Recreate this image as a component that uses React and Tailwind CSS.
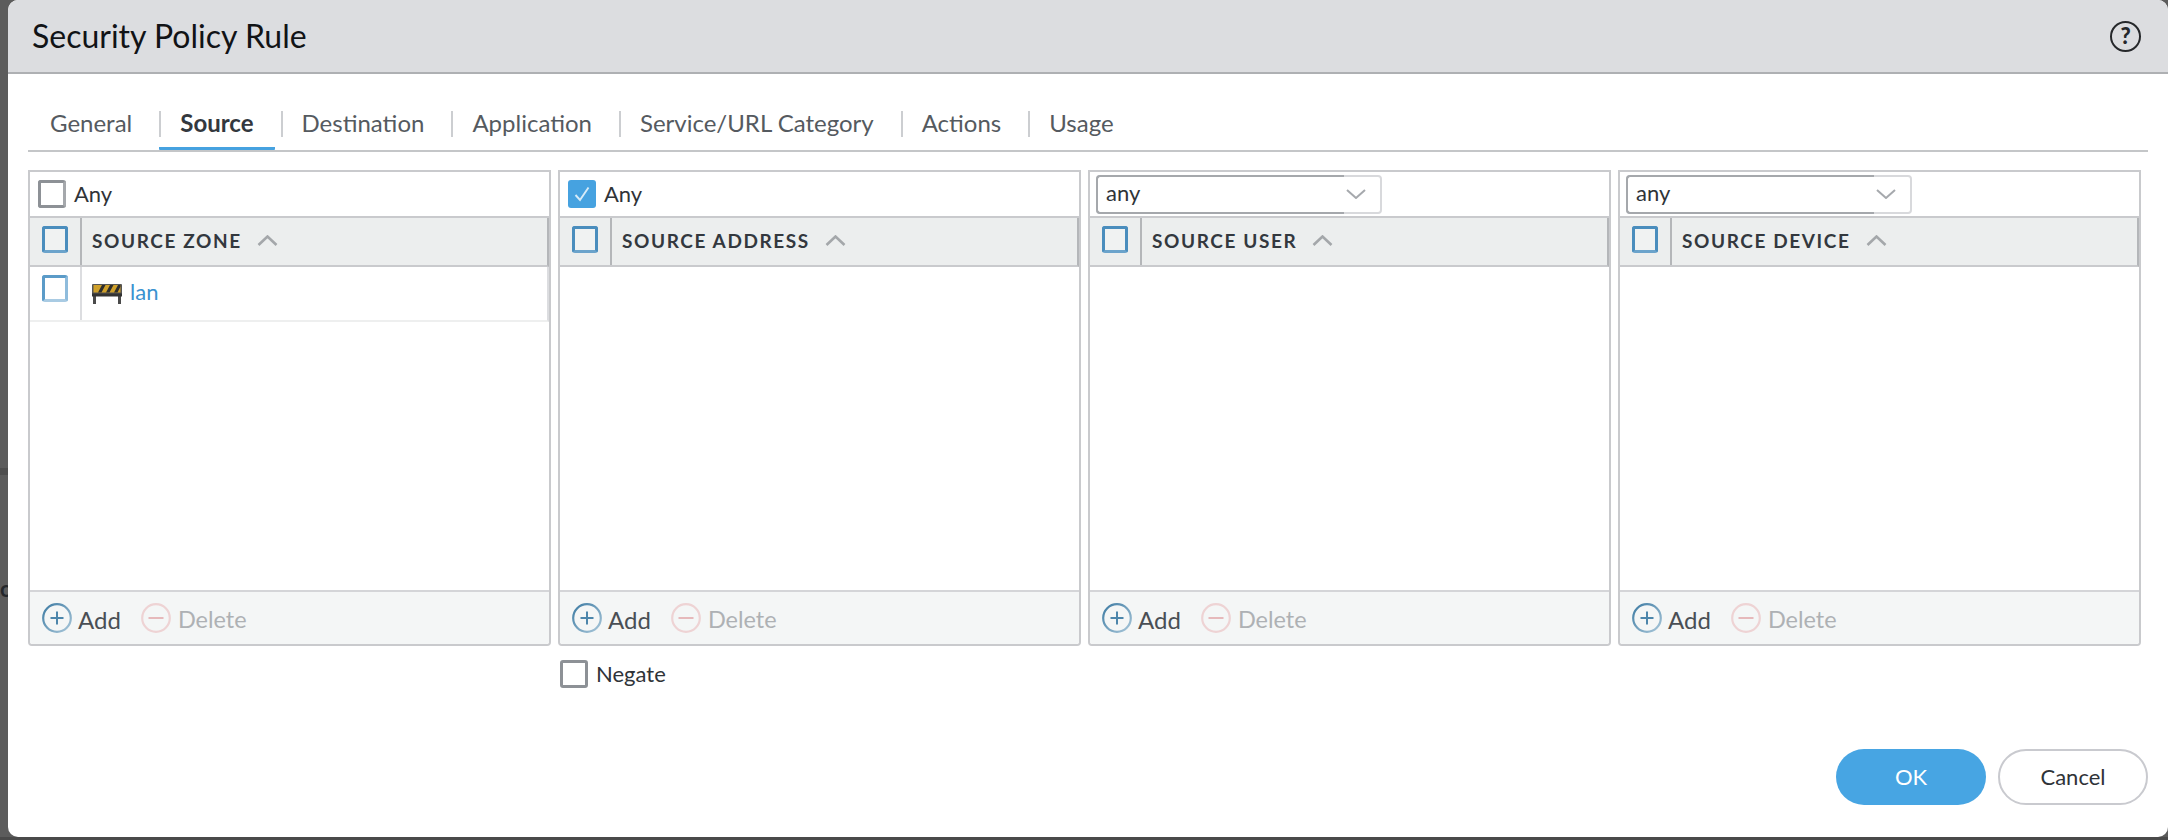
import React from "react";

function PlusIcon() {
  return (
    <svg width="30" height="30" viewBox="0 0 30 30" className="shrink-0">
      <defs>
        <linearGradient id="addRing" x1="0" y1="0" x2="1" y2="1">
          <stop offset="0" stopColor="#3d7ba3" />
          <stop offset="1" stopColor="#a8c6d9" />
        </linearGradient>
      </defs>
      <circle cx="15" cy="15" r="13.8" fill="none" stroke="url(#addRing)" strokeWidth="2.2" />
      <path d="M15 8.5v13M8.5 15h13" stroke="#4d86ab" strokeWidth="2" fill="none" />
    </svg>
  );
}

function MinusIcon() {
  return (
    <svg width="30" height="30" viewBox="0 0 30 30" className="shrink-0">
      <circle cx="15" cy="15" r="13.8" fill="none" stroke="#eed3d4" strokeWidth="2.2" />
      <path d="M7.5 15h15" stroke="#e6b9bb" strokeWidth="2" fill="none" />
    </svg>
  );
}

function BarrierIcon() {
  return (
    <svg width="30" height="21" viewBox="0 0 30 21" className="shrink-0">
      <rect x="1" y="12" width="3" height="9" fill="#4a4a4a" />
      <rect x="26" y="12" width="3" height="9" fill="#4a4a4a" />
      <rect x="0" y="1" width="30" height="12" rx="1" fill="#555555" />
      <rect x="1.5" y="2" width="27" height="7.5" fill="#cfa02a" />
      <path d="M6 9.5 10 2h3.5l-4 7.5zM14 9.5 18 2h3.5l-4 7.5zM22 9.5 26 2h2.5v1.5l-3 6z" fill="#2e2e2e" />
      <rect x="0" y="10.5" width="30" height="3" fill="#333333" />
    </svg>
  );
}

function BlueCheck({ soft }) {
  return (
    <span
      className={
        soft
          ? "block w-[26px] h-[27px] rounded-[3px] border-[3px] border-[#5b9bc8] border-b-[#a9cbe3] border-r-[#8fbcdc] bg-white"
          : "block w-[26px] h-[27px] rounded-[3px] border-[3px] border-[#4a8dbd] border-b-[#6ba3cb] bg-[#f0f2f2]"
      }
    />
  );
}

function AnyCheck({ checked, label }) {
  return (
    <div className="flex items-center gap-[8px]">
      {checked ? (
        <span className="flex items-center justify-center w-[28px] h-[28px] rounded-[3px] bg-[#46a2e0]">
          <svg width="20" height="20" viewBox="0 0 20 20">
            <path d="M3.5 11 8 16 16.5 3.5" stroke="#d6ebf8" strokeWidth="1.9" fill="none" />
          </svg>
        </span>
      ) : (
        <span className="block w-[28px] h-[28px] rounded-[3px] border-[3px] border-[#8d9196] border-r-[#a5a8ac] bg-white" />
      )}
      <span className="text-[22px] leading-none text-[#2f3338]">{label}</span>
    </div>
  );
}

function AnySelect() {
  return (
    <div className="relative flex items-center justify-between w-[286px] h-[39px] ml-[6px] pl-[8px] pr-[14px] rounded-[4px] border-2 border-[#d8d9dc] bg-white">
      <span className="text-[22px] leading-none text-[#2f3338] -mt-[3px]">any</span>
      <svg width="20" height="10" viewBox="0 0 20 10">
        <path d="M1 1l9 8 9-8" stroke="#a6a9ad" strokeWidth="2" fill="none" />
      </svg>
      <span className="absolute -left-[2px] -top-[2px] -bottom-[2px] w-[248px] rounded-l-[4px] border-2 border-r-0 border-[#a5a8ac]" />
    </div>
  );
}

function Panel({ title, control, children }) {
  return (
    <div className="flex flex-col h-[476px] border-2 border-[#c9cacd] rounded-b-[4px] bg-white">
      <div className="flex items-center h-[46px] shrink-0 border-b-2 border-[#c9cacd]">{control}</div>
      <div className="flex h-[49px] shrink-0 border-b-2 border-[#c9cacd] border-r-2 border-r-[#b4b6b9] bg-[#eceeee]">
        <div className="flex items-center justify-center w-[52px] shrink-0 border-r-2 border-[#b4b6b9] pr-[1px]">
          <span className="-mt-[5px]"><BlueCheck /></span>
        </div>
        <div className="flex items-center pl-[10px] gap-[15px] -mt-[2px]">
          <span className="text-[19px] leading-none font-bold tracking-[1.6px] text-[#33383e]">{title}</span>
          <svg width="21" height="11" viewBox="0 0 21 11">
            <path d="M1.5 10l9-8.5 9 8.5" stroke="#a4a7aa" strokeWidth="2.6" fill="none" />
          </svg>
        </div>
      </div>
      <div className="flex-1">{children}</div>
      <div className="flex items-center h-[54px] shrink-0 border-t-2 border-[#d4d5d8] bg-[#f4f6f6] pl-[12px] rounded-b-[3px]">
        <PlusIcon />
        <span className="ml-[6px] text-[24px] leading-none text-[#4a4f55] mt-[3px]">Add</span>
        <span className="ml-[20px]"><MinusIcon /></span>
        <span className="ml-[7px] text-[23.5px] leading-none text-[#aeb1b4] mt-[3px]">Delete</span>
      </div>
    </div>
  );
}

const tabs = [
  ["General", false],
  ["Source", true],
  ["Destination", false],
  ["Application", false],
  ["Service/URL Category", false],
  ["Actions", false],
  ["Usage", false],
];

export default function App() {
  return (
    <div className="relative h-[840px] w-full overflow-hidden bg-[#5c5c5c] font-['Lato','Noto_Sans',sans-serif]">
      <div className="absolute left-0 top-[468px] h-[7px] w-[8px] bg-[#4e4e4e]" />
      <div className="absolute left-0 top-[578px] text-[22px] font-bold leading-none text-[#24272b]">c</div>
      <div className="absolute bottom-0 left-0 h-[3px] w-full bg-[#4a4a4a]" />
      <div className="relative ml-[8px] flex h-[837px] flex-col overflow-hidden rounded-[10px] bg-white">
        <div className="flex h-[74px] shrink-0 items-center justify-between border-b-2 border-[#aeb0b3] bg-[#dcdde0] pl-[24px] pr-[27px]">
          <h1 className="text-[32px] font-normal leading-none text-[#111316]">Security Policy Rule</h1>
          <span className="flex h-[31px] w-[31px] items-center justify-center rounded-full border-[2.5px] border-[#26282b] text-[22px] font-black leading-none text-[#26282b]">?</span>
        </div>

        <div className="mx-[20px] mt-[34px] flex h-[44px] shrink-0 items-start border-b-2 border-[#c4c6c8] pl-[1px]">
          {tabs.map(([name, active], i) => (
            <div key={name} className="flex h-[42px] items-start mr-[6px]">
              {i > 0 && <span className="mt-[3px] h-[26px] w-[2px] -mr-[2px] bg-[#ccced1]" />}
              <div
                className={
                  active
                    ? "h-[42px] px-[21px] text-[24px] font-bold leading-[30px] text-[#33383e] border-b-[3px] border-[#46a2e0] rounded-b-[1px]"
                    : "px-[21px] text-[24px] leading-[30px] text-[#555a60]"
                }
              >
                {name}
              </div>
            </div>
          ))}
        </div>

        <div className="ml-[20px] mr-[27px] mt-[18px] grid shrink-0 grid-cols-4 gap-x-[7px]">
          <Panel title="SOURCE ZONE" control={<div className="pl-[8px]"><AnyCheck label="Any" /></div>}>
            <div className="flex h-[55px] border-b-2 border-[#eeefef] border-r-2 border-r-[#dcdde0]">
              <div className="flex w-[52px] shrink-0 justify-center border-r-2 border-[#dcdde0] pt-[8px] pr-[1px]">
                <BlueCheck soft />
              </div>
              <div className="flex items-center gap-[8px] pl-[10px]">
                <BarrierIcon />
                <span className="text-[22px] leading-none text-[#3a92d0] -mt-[3px]">lan</span>
              </div>
            </div>
          </Panel>
          <Panel title="SOURCE ADDRESS" control={<div className="pl-[8px]"><AnyCheck checked label="Any" /></div>} />
          <Panel title="SOURCE USER" control={<AnySelect />} />
          <Panel title="SOURCE DEVICE" control={<AnySelect />} />
          <div className="col-start-2 mt-[14px] pl-[2px]">
            <div className="flex items-center gap-[8px]">
              <span className="block h-[28px] w-[28px] rounded-[3px] border-[3px] border-[#8d9196] bg-white" />
              <span className="text-[22px] leading-none text-[#2f3338]">Negate</span>
            </div>
          </div>
        </div>

        <div className="mr-[20px] mt-[61px] flex shrink-0 justify-end gap-[12px]">
          <button className="h-[56px] w-[150px] rounded-full bg-[#47a5e3] pb-[2px] text-[22px] text-white">OK</button>
          <button className="h-[56px] w-[150px] rounded-full border-2 border-[#c9cacf] bg-white pb-[2px] text-[22px] text-[#2f3338]">Cancel</button>
        </div>
      </div>
    </div>
  );
}
